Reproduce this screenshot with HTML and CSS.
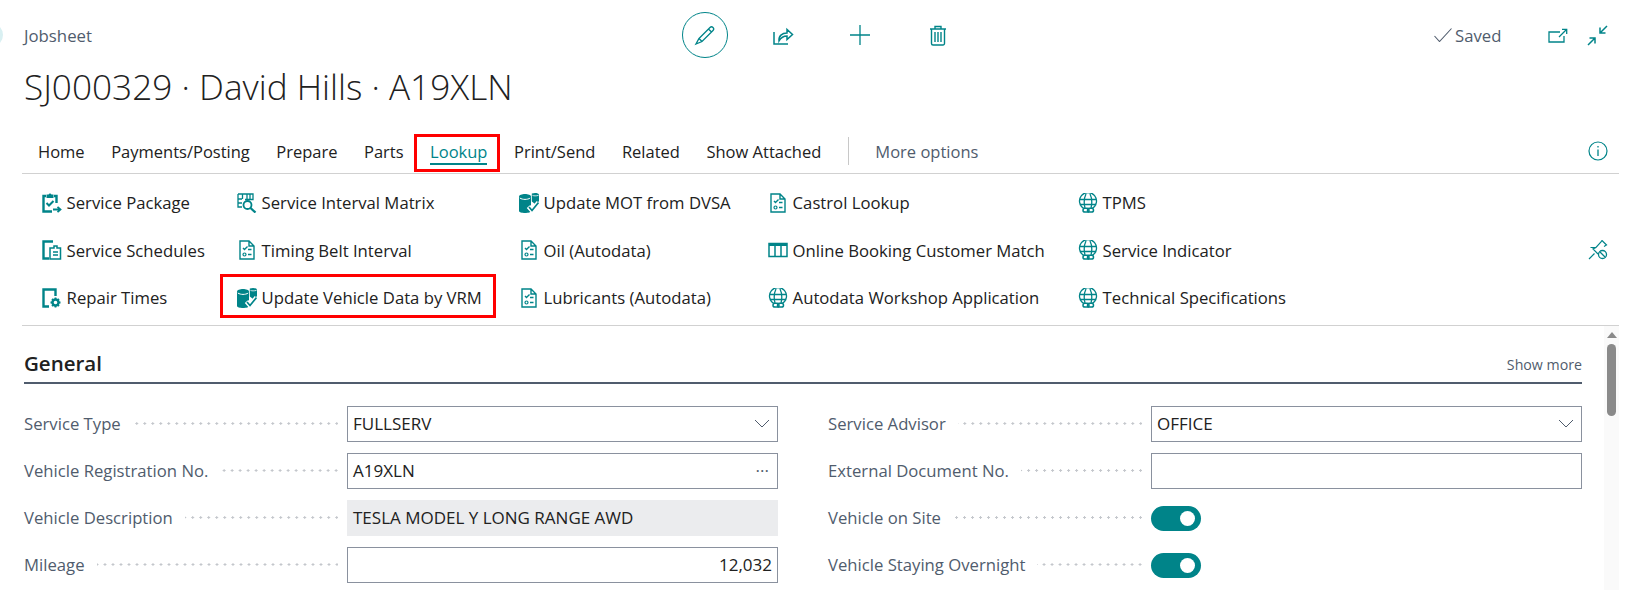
FILE: index.html
```html
<!DOCTYPE html>
<html lang="en">
<head>
    <meta charset="UTF-8">
    <title>Jobsheet</title>
    <link rel="stylesheet" href="styles.css">
</head>
<body>
    <svg class="sprites" width="0" height="0">
        <symbol id="i-package" viewBox="0 0 20 20">
            <path d="M4 3H1.500v15.500H10M12 3h2.500v7" fill="none" stroke="currentColor" stroke-width="2.400"/>
            <path d="M4.500 1.500h2l1-1h1l1 1h2V5h-7z" fill="currentColor"/>
            <path d="M4.500 10l2.500 2.500L11.500 8" fill="none" stroke="currentColor" stroke-width="2"/>
            <path d="M11 16.500h7M15.500 13.800l3 2.700-3 2.700" fill="none" stroke="currentColor" stroke-width="1.800"/>
        </symbol>
        <symbol id="i-schedule" viewBox="0 0 20 20">
            <path d="M7 18.500H1.500V1.500H11" fill="none" stroke="currentColor" stroke-width="2.400"/>
            <path d="M8 8h4V6h3v2h3.500v11H8z" fill="none" stroke="currentColor" stroke-width="1.500"/>
            <path d="M11 12h5M11 15h5" stroke="currentColor" stroke-width="1.400"/>
        </symbol>
        <symbol id="i-repair" viewBox="0 0 20 20">
            <path d="M7 18.500H1.500V1.500h12V8" fill="none" stroke="currentColor" stroke-width="2.400"/>
            <circle cx="13.500" cy="14.500" r="3" fill="none" stroke="currentColor" stroke-width="2.400"/>
            <path d="M13.500 9.500v2M13.500 17.500v2M8.500 14.500h2M16.500 14.500h2M10 11l1.400 1.400M15.600 16.600l1.400 1.400M10 18l1.400-1.400M15.600 12.400l1.400-1.400" stroke="currentColor" stroke-width="1.800"/>
        </symbol>
        <symbol id="i-matrix" viewBox="0 0 20 20">
            <path d="M1 1h15v5.500H8M1 1v13h4M1 6h4M1 10h4M5.500 1v5M10 1v5M13 1v5" fill="none" stroke="currentColor" stroke-width="1.300"/>
            <circle cx="10.500" cy="12" r="4" fill="none" stroke="currentColor" stroke-width="1.800"/>
            <path d="M13.500 15l5 4.500" stroke="currentColor" stroke-width="2.300"/>
        </symbol>
        <symbol id="i-checklist" viewBox="0 0 20 20">
            <path d="M3 1h9l5 5v13H3zM12 1v5h5" fill="none" stroke="currentColor" stroke-width="1.400"/>
            <path d="M6 8l1.500 1.500L10.500 6.500M11 9.500h3.500M11 14.500h3.500" fill="none" stroke="currentColor" stroke-width="1.400"/>
            <circle cx="7.500" cy="14.500" r="1.500" fill="none" stroke="currentColor" stroke-width="1.200"/>
        </symbol>
        <symbol id="i-data" viewBox="0 0 20 20">
            <path d="M0 3.500C0 2 3 1 6 1s6 1 6 2.500V18c0 1.300-3 2-6 2s-6-.7-6-2z" fill="currentColor"/>
            <path d="M0.800 5c1.500 1 3.500 1.400 5.200 1.400S10 6 11.200 5" fill="none" stroke="#fff" stroke-width="1"/>
            <path d="M12.800 .6C14 .2 15 0 16 0c2 0 4 .6 4 2v6l-3 3.800-4.200-3.200z" fill="currentColor"/>
            <path d="M13.500 2.400c1.500.6 3.500.6 6 0" fill="none" stroke="#fff" stroke-width=".8"/>
            <path d="M9.500 13.500l3.500 4 6.500-8" fill="none" stroke="#fff" stroke-width="4.500"/>
            <path d="M10 14l3 3.500 6.500-8" fill="none" stroke="currentColor" stroke-width="1.700"/>
        </symbol>
        <symbol id="i-table" viewBox="0 0 20 20">
            <path d="M1 3.500h18v13H1zM7 6v10.500M13 6v10.500" fill="none" stroke="currentColor" stroke-width="1.500"/>
            <path d="M1 3h18v3H1z" fill="currentColor"/>
        </symbol>
        <symbol id="i-globe" viewBox="0 0 20 20">
            <path d="M6 15.500A8.500 8.500 0 1 1 14 15.500M1.500 6.500h17M1.500 11.500h17M8 1C6 5 6 11 7 15M12 1c2 4 2 10 1 14" fill="none" stroke="currentColor" stroke-width="1.300"/>
            <rect x="5" y="15.300" width="6" height="3.800" rx="1.900" fill="none" stroke="currentColor" stroke-width="1.500"/>
            <rect x="9.500" y="15.300" width="6" height="3.800" rx="1.900" fill="none" stroke="currentColor" stroke-width="1.500"/>
        </symbol>
    </svg>

    <div class="avatar-edge"></div>

    <header class="page-head">
        <div class="head-top">
            <span class="caption">Jobsheet</span>
            <div class="actions">
                <button class="action action-edit">
                    <svg width="22" height="22" viewBox="0 0 22 22"><path d="M5 14.500L16 3.500a2.100 2.100 0 0 1 3 3L8 17.500 2 20zM14.500 5l3 3M5 14.500l3 3" fill="none" stroke="currentColor" stroke-width="1.300"/></svg>
                </button>
                <button class="action">
                    <svg width="22" height="20" viewBox="0 0 22 20"><path d="M2 7v12h14M7 16c-.500-5 3-8 8-8V4.500l5.500 5-5.500 5V11c-3.500 0-6 1.500-8 5z" fill="none" stroke="currentColor" stroke-width="1.500"/></svg>
                </button>
                <button class="action">
                    <svg width="22" height="22" viewBox="0 0 22 22"><path d="M11 1v20M1 11h20" stroke="currentColor" stroke-width="1.300"/></svg>
                </button>
                <button class="action">
                    <svg width="18" height="21" viewBox="0 0 18 21"><path d="M1 4h16M6 4V1.500h6V4M2.500 4v14.500a1.500 1.500 0 0 0 1.500 1.500h10a1.500 1.500 0 0 0 1.500-1.500V4M6 7v10M9 7v10M12 7v10" fill="none" stroke="currentColor" stroke-width="1.400"/></svg>
                </button>
            </div>
            <div class="status">
                <svg class="status-check" width="18" height="14" viewBox="0 0 18 14"><path d="M.500 8l5 5.500L17.500.500" fill="none" stroke="currentColor" stroke-width="1.100"/></svg>
                <span>Saved</span>
                <svg class="popout" width="20" height="15" viewBox="0 0 20 15"><path d="M12 4H1v10h15V8M11 9l7-7M14 1.300h4.700V6" fill="none" stroke="currentColor" stroke-width="1.300"/></svg>
                <svg class="collapse" width="21" height="21" viewBox="0 0 21 21"><path d="M20 1l-7 7M13 2.500V8h5.500M1 20l7-7M2.500 13H8v5.500" fill="none" stroke="currentColor" stroke-width="1.500"/></svg>
            </div>
        </div>
        <h1 class="title">SJ000329 · David Hills · A19XLN</h1>
    </header>

    <nav class="tabs">
        <a class="tab">Home</a>
        <a class="tab">Payments/Posting</a>
        <a class="tab">Prepare</a>
        <a class="tab">Parts</a>
        <a class="tab tab-active"><span>Lookup</span></a>
        <a class="tab">Print/Send</a>
        <a class="tab">Related</a>
        <a class="tab">Show Attached</a>
        <span class="tab-sep"></span>
        <a class="tab tab-more">More options</a>
        <svg class="tab-info" width="20" height="20" viewBox="0 0 20 20"><circle cx="10" cy="10" r="9" fill="none" stroke="currentColor" stroke-width="1.200"/><path d="M10 8.500V15M10 5v1.600" stroke="currentColor" stroke-width="1.300"/></svg>
    </nav>

    <section class="ribbon">
        <div class="ribbon-grid">
            <a class="cmd"><svg><use href="#i-package"/></svg>Service Package</a>
            <a class="cmd"><svg><use href="#i-schedule"/></svg>Service Schedules</a>
            <a class="cmd"><svg><use href="#i-repair"/></svg>Repair Times</a>
            <a class="cmd"><svg><use href="#i-matrix"/></svg>Service Interval Matrix</a>
            <a class="cmd"><svg><use href="#i-checklist"/></svg>Timing Belt Interval</a>
            <a class="cmd cmd-marked"><svg><use href="#i-data"/></svg>Update Vehicle Data by VRM</a>
            <a class="cmd"><svg><use href="#i-data"/></svg>Update MOT from DVSA</a>
            <a class="cmd"><svg><use href="#i-checklist"/></svg>Oil (Autodata)</a>
            <a class="cmd"><svg><use href="#i-checklist"/></svg>Lubricants (Autodata)</a>
            <a class="cmd"><svg><use href="#i-checklist"/></svg>Castrol Lookup</a>
            <a class="cmd"><svg><use href="#i-table"/></svg>Online Booking Customer Match</a>
            <a class="cmd"><svg><use href="#i-globe"/></svg>Autodata Workshop Application</a>
            <a class="cmd"><svg><use href="#i-globe"/></svg>TPMS</a>
            <a class="cmd"><svg><use href="#i-globe"/></svg>Service Indicator</a>
            <a class="cmd"><svg><use href="#i-globe"/></svg>Technical Specifications</a>
        </div>
        <svg class="ribbon-pin" width="20" height="20" viewBox="0 0 20 20"><path d="M1 19l5.500-5.500M2.500 7.500l5.500 0 5-5.500 1-1.500 4.500 4.500-2.500 1.500M8 7.500L5 9l5 5" fill="none" stroke="currentColor" stroke-width="1.200"/><circle cx="14.500" cy="14.500" r="4" fill="none" stroke="currentColor" stroke-width="1.300"/><path d="M12 12l5 5" stroke="currentColor" stroke-width="1.300"/></svg>
    </section>

    <main class="content">
        <div class="card">
            <div class="card-head">
                <h2>General</h2>
                <a class="show-more">Show more</a>
            </div>
            <div class="form">
                <div class="form-col">
                    <div class="field">
                        <label class="field-label"><span>Service Type</span></label>
                        <div class="input">FULLSERV<svg class="chevron" width="16" height="9" viewBox="0 0 16 9"><path d="M1 1l7 7 7-7" fill="none" stroke="currentColor" stroke-width="1"/></svg></div>
                    </div>
                    <div class="field">
                        <label class="field-label"><span>Vehicle Registration No.</span></label>
                        <div class="input">A19XLN<span class="dots">···</span></div>
                    </div>
                    <div class="field">
                        <label class="field-label"><span>Vehicle Description</span></label>
                        <div class="input input-readonly">TESLA MODEL Y LONG RANGE AWD</div>
                    </div>
                    <div class="field">
                        <label class="field-label"><span>Mileage</span></label>
                        <div class="input input-number">12,032</div>
                    </div>
                </div>
                <div class="form-col">
                    <div class="field">
                        <label class="field-label"><span>Service Advisor</span></label>
                        <div class="input">OFFICE<svg class="chevron" width="16" height="9" viewBox="0 0 16 9"><path d="M1 1l7 7 7-7" fill="none" stroke="currentColor" stroke-width="1"/></svg></div>
                    </div>
                    <div class="field">
                        <label class="field-label"><span>External Document No.</span></label>
                        <div class="input"></div>
                    </div>
                    <div class="field">
                        <label class="field-label"><span>Vehicle on Site</span></label>
                        <div class="toggle"></div>
                    </div>
                    <div class="field">
                        <label class="field-label"><span>Vehicle Staying Overnight</span></label>
                        <div class="toggle"></div>
                    </div>
                </div>
            </div>
        </div>
        <div class="scrollbar">
            <span class="scroll-up"></span>
            <span class="scroll-thumb"></span>
        </div>
    </main>
</body>
</html>
```

FILE: styles.css
```css
*, *::after {
    box-sizing: border-box;
}
body {
    margin: 0;
    height: 590px;
    overflow: hidden;
    position: relative;
    background: #fff;
    color: #212121;
    font-family: "Open Sans", "Noto Sans", sans-serif;
    font-size: 16.700px;
}
.sprites {
    position: absolute;
}
.avatar-edge {
    position: absolute;
    left: -20px;
    top: 23px;
    width: 23px;
    height: 24px;
    border-radius: 50%;
    background: #d9f0f2;
}

/* header */
.page-head {
    height: 134px;
    padding-left: 24px;
}
.head-top {
    display: flex;
    align-items: center;
    height: 70px;
}
.caption {
    width: 658px;
    color: #505c6d;
    font-size: 16.800px;
}
.actions {
    display: flex;
    align-items: center;
    gap: 31.500px;
}
.action {
    width: 46px;
    height: 46px;
    padding: 0;
    display: flex;
    align-items: center;
    justify-content: center;
    border: none;
    background: none;
    color: #008489;
}
.action-edit {
    border: 1px solid #008489;
    border-radius: 50%;
}
.status {
    margin-left: auto;
    width: 212px;
    display: flex;
    align-items: center;
    color: #505c6d;
}
.status-check {
    margin-right: 3px;
}
.popout {
    margin-left: 47px;
    color: #008489;
}
.collapse {
    margin-left: 19px;
    color: #008489;
}
.title {
    margin: 0;
    font-size: 35.200px;
    font-weight: 300;
    line-height: 32px;
    color: #212121;
}

/* tabs */
.tabs {
    margin-left: 22px;
    width: 1597px;
    height: 40px;
    padding: 0 0 5px 16px;
    display: flex;
    align-items: center;
    gap: 26.500px;
    border-bottom: 1px solid #d1d1d1;
    font-size: 16.500px;
}
.tab {
    white-space: nowrap;
}
.tab-active {
    position: relative;
    color: #008489;
}
.tab-active span {
    border-bottom: 2px solid #008489;
}
.tab-active::after {
    content: "";
    position: absolute;
    left: -16px;
    right: -13px;
    top: -6px;
    bottom: -9px;
    border: 3px solid #f00;
}
.tab-sep {
    width: 1px;
    height: 28px;
    background: #c8c8c8;
}
.tab-more {
    color: #505c6d;
}
.tab-info {
    margin-left: auto;
    margin-right: 11px;
    color: #008489;
}

/* ribbon */
.ribbon {
    margin-left: 22px;
    width: 1597px;
    height: 152px;
    padding: 5px 11px 0 20px;
    display: flex;
    justify-content: space-between;
    border-bottom: 1px solid #d1d1d1;
}
.ribbon-grid {
    display: grid;
    grid-template-rows: repeat(3, 47.500px);
    grid-template-columns: 195px 282px 249px 310px auto;
    grid-auto-flow: column;
}
.cmd {
    display: flex;
    align-items: center;
    gap: 4.600px;
    white-space: nowrap;
}
.cmd svg {
    flex: none;
    width: 20px;
    height: 20px;
    color: #008489;
}
.cmd-marked {
    position: relative;
}
.cmd-marked::after {
    content: "";
    position: absolute;
    left: -17px;
    width: 276px;
    top: 0;
    height: 44px;
    border: 3px solid #f00;
}
.ribbon-pin {
    align-self: center;
    margin-top: -5px;
    color: #008489;
}

/* form */
.content {
    display: flex;
    width: 1619px;
    height: 264px;
}
.card {
    flex: 1;
    padding-left: 24px;
    padding-right: 22px;
}
.card-head {
    height: 58px;
    display: flex;
    align-items: center;
    justify-content: space-between;
    padding-top: 17px;
    border-bottom: 2px solid #505c6d;
}
.card-head h2 {
    margin: 0;
    font-size: 20.500px;
    font-weight: 600;
}
.show-more {
    margin-top: 3px;
    color: #505c6d;
    font-size: 14.200px;
}
.form {
    display: flex;
    gap: 50px;
    padding-top: 22px;
}
.form-col {
    flex: 1;
    display: flex;
    flex-direction: column;
    gap: 11px;
}
.field {
    display: grid;
    grid-template-columns: 314px 431px;
    gap: 9px;
    height: 36px;
    align-items: center;
}
.field-label {
    display: flex;
    align-items: center;
    padding-bottom: 2px;
    color: #505c6d;
    gap: 12px;
}
.field-label span {
    white-space: nowrap;
}
.field-label::after {
    content: "";
    flex: 1;
    height: 3px;
    background: radial-gradient(circle at 6.500px 1.500px, #c4c7cc 1px, transparent 1.200px) right center / 8px 3px repeat-x;
}
.input {
    height: 36px;
    padding: 0 5px 2px;
    display: flex;
    align-items: center;
    justify-content: space-between;
    border: 1px solid #8a919e;
    font-size: 17px;
}
.input-readonly {
    border: none;
    background: #ebecee;
    padding-left: 6px;
}
.input-number {
    justify-content: flex-end;
}
.chevron {
    margin-right: 2px;
    color: #505c6d;
}
.dots {
    margin-right: 3px;
    color: #505c6d;
    line-height: 1;
}
.toggle {
    position: relative;
    width: 50px;
    height: 25px;
    border-radius: 13px;
    background: #008489;
}
.toggle::after {
    content: "";
    position: absolute;
    right: 6px;
    top: 5px;
    width: 15px;
    height: 15px;
    border-radius: 50%;
    background: #fff;
}

/* scrollbar */
.scrollbar {
    width: 15px;
    background: #fafafa;
    padding: 6px 3px 0;
    display: flex;
    flex-direction: column;
    align-items: center;
}
.scroll-up {
    width: 0;
    height: 0;
    border-left: 5px solid transparent;
    border-right: 5px solid transparent;
    border-bottom: 6px solid #8a8a8a;
}
.scroll-thumb {
    margin-top: 6px;
    width: 9px;
    height: 72px;
    border-radius: 5px;
    background: #8a8a8a;
}
```
